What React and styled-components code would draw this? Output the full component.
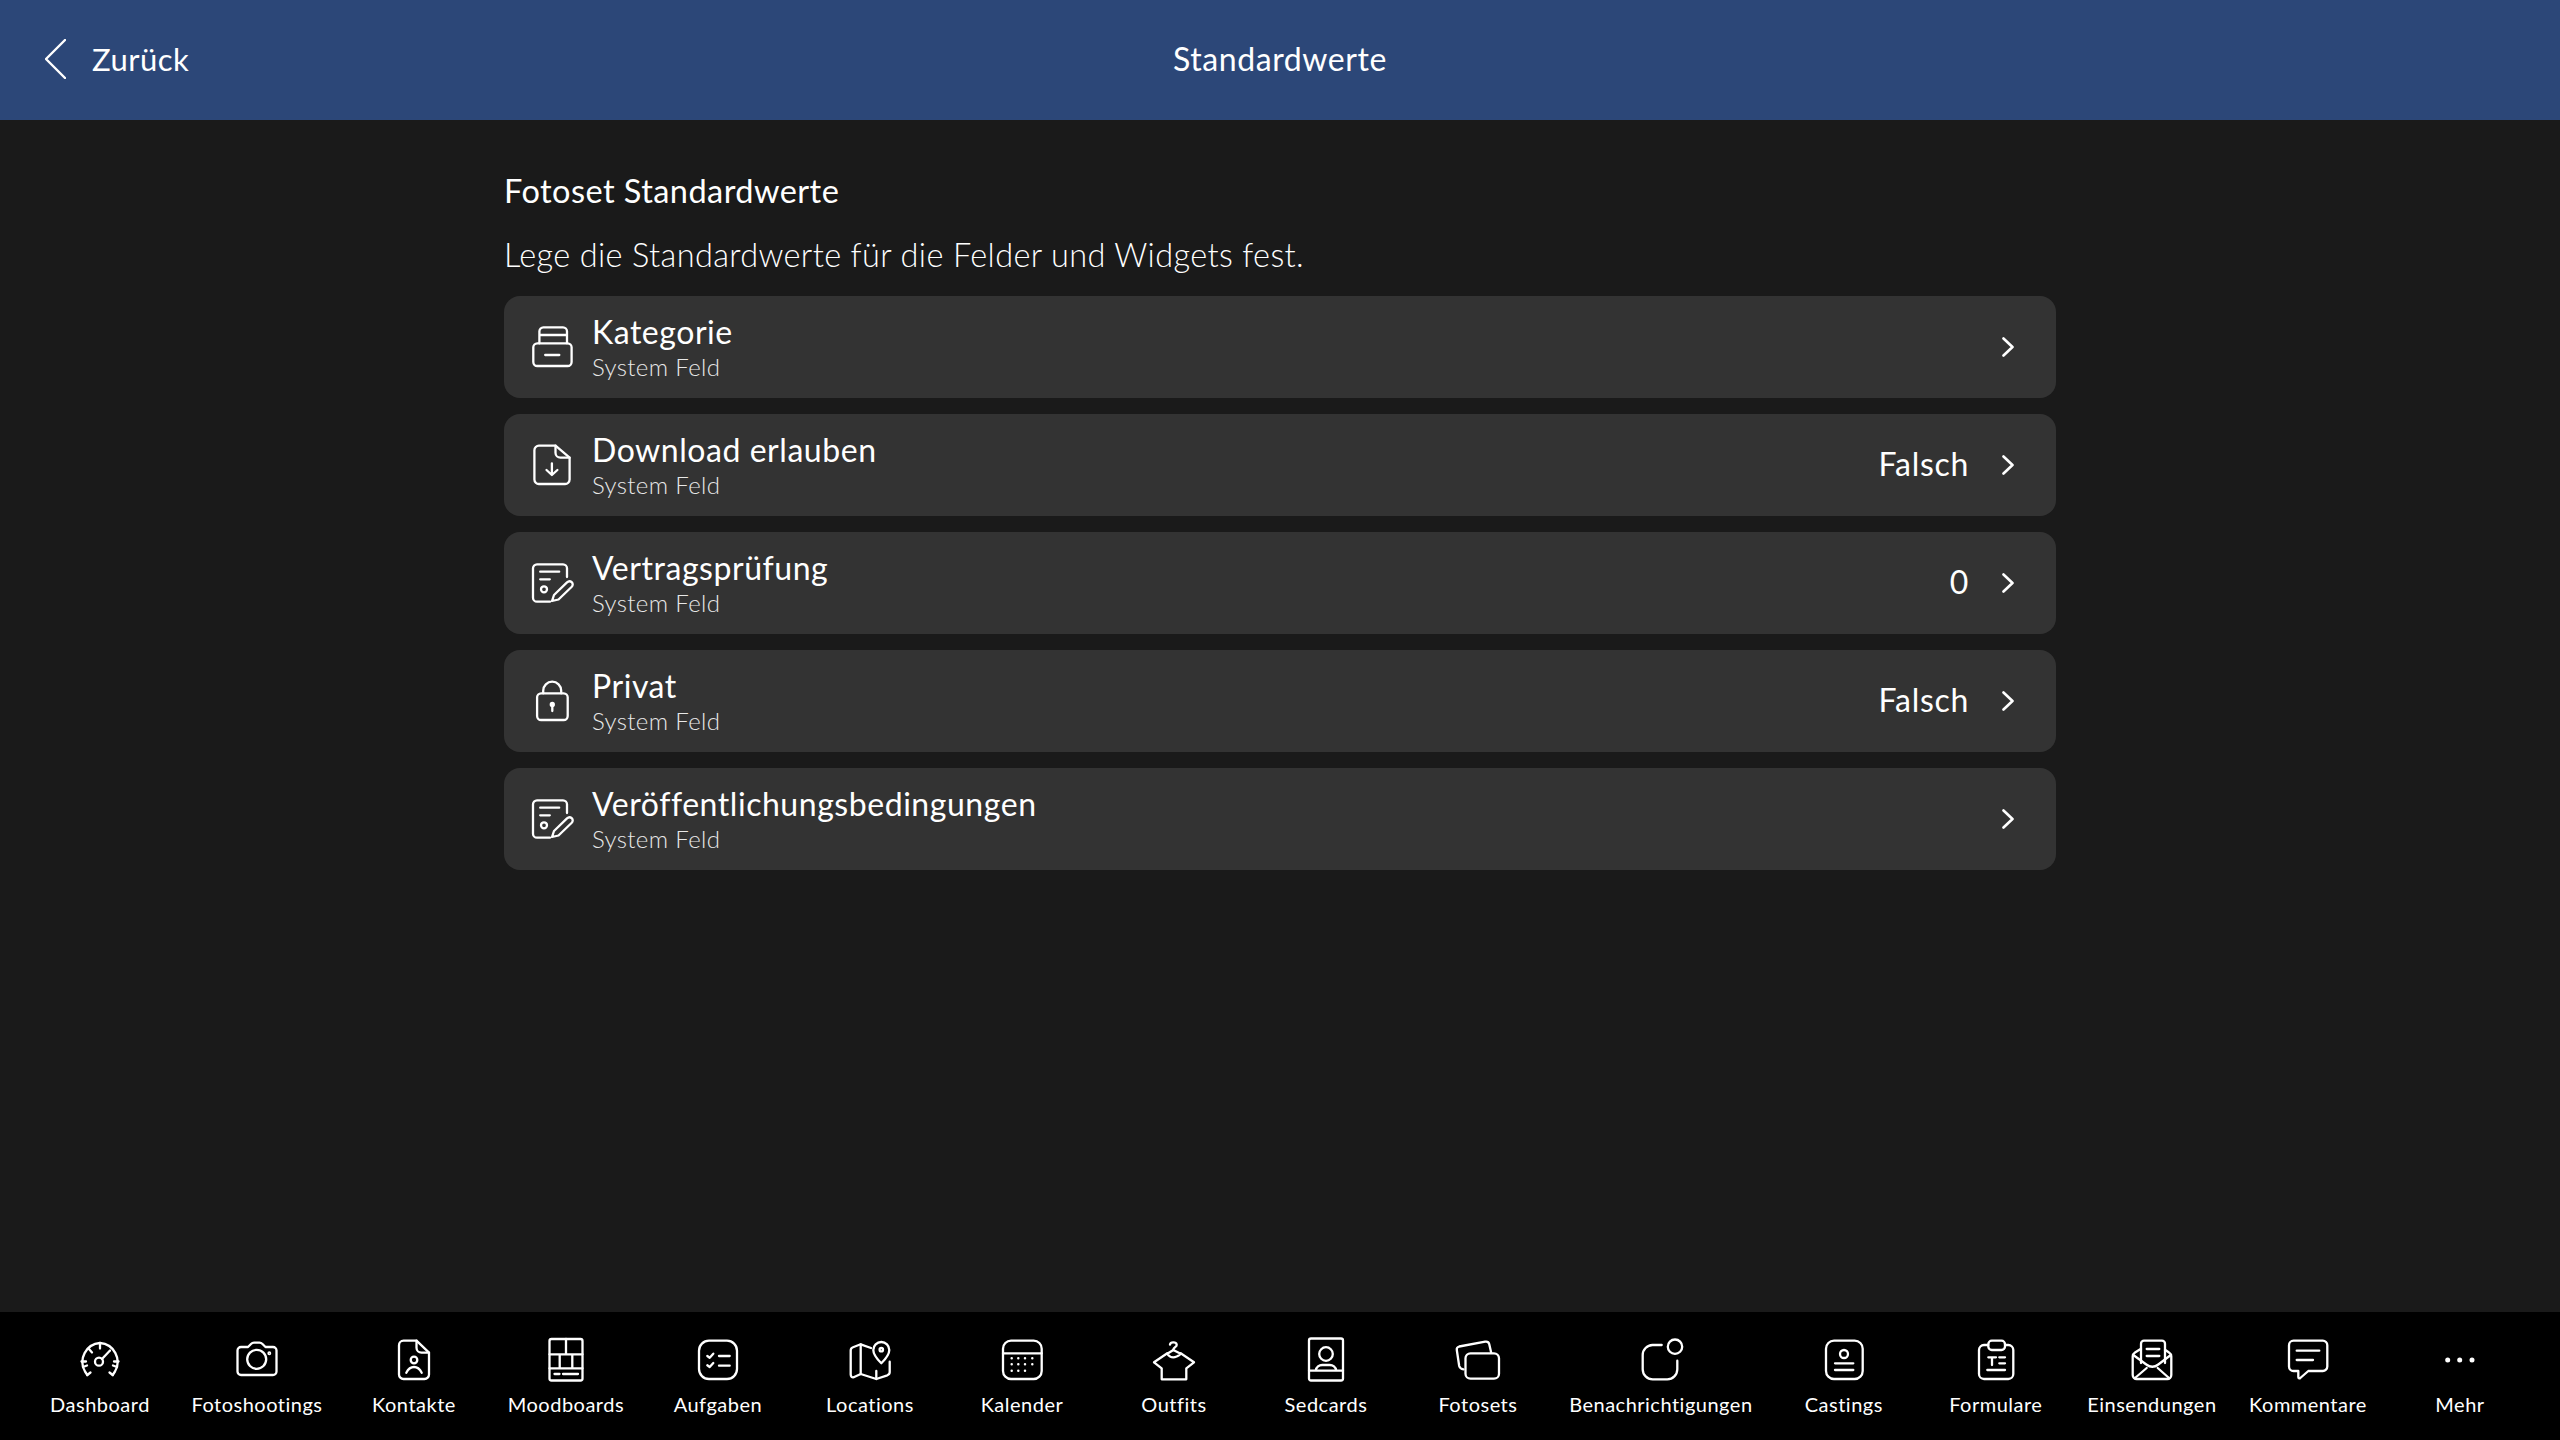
import styled, { createGlobalStyle } from 'styled-components'

const Global = createGlobalStyle`
    html, body { margin: 0; padding: 0; background: #1a1a1a; }
    body { font-family: 'Lato', 'Open Sans', sans-serif; color: #fff; }
`

const Screen = styled.div`
    display: flex;
    flex-direction: column;
    width: 2560px;
    height: 1440px;
    overflow: hidden;
    background: #1a1a1a;
`

const Header = styled.header`
    display: grid;
    grid-template-columns: 1fr auto 1fr;
    align-items: center;
    height: 120px;
    padding: 0 45px 3px;
    box-sizing: border-box;
    background: #2c4778;
    flex-shrink: 0;
`

const BackLink = styled.div`
    display: flex;
    align-items: center;
    gap: 26px;
    font-size: 31px;
    letter-spacing: 0.5px;
`

const HeaderTitle = styled.h1`
    margin: 0;
    font-size: 32px;
    font-weight: 400;
    letter-spacing: 0.6px;
`

const Content = styled.main`
    flex: 1;
    width: 1552px;
    margin: 0 auto;
    padding-top: 50px;
    box-sizing: border-box;
`

const SectionTitle = styled.h2`
    margin: 0;
    height: 42px;
    line-height: 42px;
    font-size: 32.5px;
    font-weight: 400;
    letter-spacing: 0.45px;
`

const Description = styled.p`
    margin: 22px 0 0;
    height: 42px;
    line-height: 42px;
    font-size: 32.5px;
    font-weight: 300;
    letter-spacing: 0.36px;
`

const List = styled.div`
    display: flex;
    flex-direction: column;
    gap: 16px;
    margin-top: 20px;
`

const Row = styled.div`
    display: flex;
    align-items: center;
    height: 102px;
    padding: 0 42px 0 28px;
    box-sizing: border-box;
    border-radius: 16px;
    background: #333333;
`

const RowText = styled.div`
    flex: 1;
    margin-left: 20px;
`

const RowTitle = styled.div`
    font-size: 32px;
    line-height: 38px;
    letter-spacing: 0.55px;
`

const RowSub = styled.div`
    margin-top: 1px;
    font-size: 24px;
    line-height: 30px;
    font-weight: 300;
    color: #e8e8e8;
    letter-spacing: 0.35px;
`

const RowValue = styled.div`
    margin: 0 33px 3px 0;
    font-size: 32px;
    letter-spacing: 0.7px;
`

const TabBar = styled.nav`
    display: flex;
    flex-shrink: 0;
    height: 128px;
    padding: 0 24px;
    box-sizing: border-box;
    background: #000;
`

const Tab = styled.div`
    display: flex;
    flex-direction: column;
    align-items: center;
    min-width: 152px;
    padding: 28px 16px 0;
    box-sizing: border-box;
    font-size: 20px;
    letter-spacing: 0.5px;
    white-space: nowrap;
`

const TabLabel = styled.span`
    margin-top: 11px;
    line-height: 26px;
`

const Icon = styled.svg`
    display: block;
    flex-shrink: 0;
    width: 40px;
    height: 40px;
    overflow: visible;
    fill: none;
    stroke: #fff;
    stroke-width: ${(p) => p.$weight || 2.3};
    stroke-linecap: round;
    stroke-linejoin: round;
`

const Glyph = ({ children, weight }) => <Icon viewBox="0 0 40 40" $weight={weight}>{children}</Icon>

const Chevron = () => (
    <svg width="12" height="20" viewBox="0 0 12 20" fill="none" stroke="#fff" strokeWidth="2.6" strokeLinecap="round" strokeLinejoin="round">
        <path d="M1.5 1.5 10.5 10l-9 8.5" />
    </svg>
)

const BackArrow = () => (
    <svg width="21" height="40" viewBox="0 0 21 40" fill="none" stroke="#fff" strokeWidth="2.4" strokeLinecap="round" strokeLinejoin="round">
        <path d="M20 1 1 20l19 19" />
    </svg>
)

const Contract = () => (
    <Glyph>
        <path d="M18 38.7H5a4 4 0 0 1-4-4V5.3a4 4 0 0 1 4-4h26a4 4 0 0 1 4 4V14" />
        <path d="M8.2 8.7h19M8.2 16.3h9.6" />
        <circle cx="12" cy="26.3" r="3" />
        <path d="M20 38l6.5-1.5L39.5 24c1.6-1.7 1.6-3.5.2-4.8s-3.1-1.3-4.7.2L22 32z" />
    </Glyph>
)

const rows = [
    {
        title: 'Kategorie',
        icon: (
            <Glyph>
                <rect x="1.3" y="16.3" width="38.3" height="22.7" rx="4" />
                <path d="M7.4 16.3V4.3a4 4 0 0 1 4-4H31a4 4 0 0 1 4 4v12M7.4 8h27.6M13.2 28h14.1" />
            </Glyph>
        ),
    },
    {
        title: 'Download erlauben',
        value: 'Falsch',
        icon: (
            <Glyph>
                <path d="M23.5.7H7a4.5 4.5 0 0 0-4.6 4.5v29.3A4.5 4.5 0 0 0 7 39h26a4.5 4.5 0 0 0 4.6-4.5V12.7z" />
                <path d="M23.5.7v7a5 5 0 0 0 5 5h9.1" />
                <path d="M19.9 18.3V30M14.5 25l5.4 5 5.500-5" />
            </Glyph>
        ),
    },
    { title: 'Vertragsprüfung', value: '0', icon: <Contract /> },
    {
        title: 'Privat',
        value: 'Falsch',
        icon: (
            <Glyph>
                <rect x="5.1" y="12.3" width="30.6" height="26.7" rx="4" />
                <path d="M11.2 12.3V9.7a9 9 0 0 1 18 0v2.6" />
                <circle cx="20.3" cy="23.5" r="1.5" />
                <path d="M20.3 24v6" />
            </Glyph>
        ),
    },
    { title: 'Veröffentlichungsbedingungen', icon: <Contract /> },
]

const tabs = [
    {
        label: 'Dashboard',
        icon: (
            <Glyph>
                <path d="M7.3 35 5 31.5A19 19 0 0 1 20 3a19 19 0 0 1 15 28.5L32.7 35" />
                <path d="M3 27l4-1.5M37 27l-4-1.5M1.5 21.5H6M38.5 21.5H34M20 3v5.5M9 9l3 3.5" />
                <path d="M7.3 35l3.2-2.5M32.7 35l-3.2-2.5" />
                <circle cx="19" cy="21.7" r="4" />
                <path d="M22 19l8-8.5" />
            </Glyph>
        ),
    },
    {
        label: 'Fotoshootings',
        icon: (
            <Glyph>
                <path d="M4 7h7l3-3c1-1 2-1.3 3-1.3h5.5c1 0 2 .3 3 1.3l3 3H36a3.5 3.5 0 0 1 3.5 3.5V31.5A3.5 3.5 0 0 1 36 35H4a3.5 3.5 0 0 1-3.5-3.5V10.5A3.5 3.5 0 0 1 4 7z" />
                <circle cx="19.7" cy="19.3" r="9.5" />
                <circle cx="32.3" cy="13.3" r="0.8" />
            </Glyph>
        ),
    },
    {
        label: 'Kontakte',
        icon: (
            <Glyph>
                <path d="M22.5.7H9.5A4.5 4.5 0 0 0 5 5.2v29.3A4.5 4.5 0 0 0 9.5 39h21a4.5 4.5 0 0 0 4.5-4.5V12.7z" />
                <path d="M22.5.7v7a5 5 0 0 0 5 5H35" />
                <circle cx="20" cy="20" r="3.3" />
                <path d="M12.3 32.7c2-3.9 4.7-5.7 7.7-5.700s5.7 1.8 7.7 5.7" />
            </Glyph>
        ),
    },
    {
        label: 'Moodboards',
        icon: (
            <Glyph>
                <rect x="3.5" y="-1" width="33" height="41.5" rx="2" />
                <path d="M3.5 14.3h33M3.5 28.3h33M20 -1v15.3M13.7 14.3v14M26.3 14.3v14M8.5 34h5M17 34h15" />
            </Glyph>
        ),
    },
    {
        label: 'Aufgaben',
        icon: (
            <Glyph>
                <rect x="1" y="0.7" width="38" height="38.3" rx="10" />
                <path d="M9.3 16l2.4 1.7 3.600-4M9.3 25.3l2.4 1.7 3.600-4M21 16h10.7M21 25.7h10.7" />
            </Glyph>
        ),
    },
    {
        label: 'Locations',
        icon: (
            <Glyph>
                <path d="M21 8l-10.3-3.7-7.700 3A3.5 3.5 0 0 0 .7 10.5v24c0 2 1.4 3.2 3 2.7l7-3.2L26.3 39l11-3.7c1.5-.6 2.4-1.4 2.4-3V21.7" />
                <path d="M10.7 4.3V34M26.3 31v8" />
                <path d="M31.3 23.3c-5-5-8-9-8-13.3a8 8 0 0 1 16 0c0 4.3-3 8.3-8 13.3z" />
                <circle cx="31.3" cy="9.7" r="1.7" />
            </Glyph>
        ),
    },
    {
        label: 'Kalender',
        icon: (
            <Glyph>
                <rect x="1" y="0.7" width="38.7" height="38.3" rx="8" />
                <path d="M1 13.3h38.7" />
                <path strokeWidth="2.5" d="M9.7 18.3h0M16.3 18.3h0M23 18.3h0M30.3 18.3h0M9.7 24.3h0M16.3 24.3h0M23 24.3h0M30.3 24.3h0M9.7 30.7h0M16.3 30.7h0M23 30.7h0" />
            </Glyph>
        ),
    },
    {
        label: 'Outfits',
        icon: (
            <Glyph>
                <path d="M16 4.5c.5-2.4 5.8-3 6.7 0 .6 2.3-3.4 3-3.4 5.5" />
                <path d="M19.3 10l-6 3.8c2 2.8 4 3.5 6 3.5s4-.7 7.4-3.5z" />
                <path d="M13.3 13.3 0 22.3l7.7 6v11h24.6v-11l7.7-6-13.3-9" />
            </Glyph>
        ),
    },
    {
        label: 'Sedcards',
        icon: (
            <Glyph>
                <rect x="3" y="-1.5" width="34" height="42" rx="2" />
                <circle cx="20" cy="14" r="6.8" />
                <path d="M3 30.7h34M9.7 30.7c.5-3.7 3.5-5.7 6.5-5.7h7.6c3 0 6 2 6.5 5.7" />
            </Glyph>
        ),
    },
    {
        label: 'Fotosets',
        icon: (
            <Glyph>
                <rect x="7.5" y="13.3" width="33.5" height="25.4" rx="5" />
                <path d="M5.5 29.3C3 29 1.7 28 1.2 26L-1.2 10C-1.5 8-.5 6.9 1.2 6.5L27.2 1.7C29.5 1.3 30.8 2.5 31.2 4L33.2 12.7" />
            </Glyph>
        ),
    },
    {
        label: 'Benachrichtigungen',
        icon: (
            <Glyph>
                <path d="M20.7 5H11.5A10 10 0 0 0 1.7 15v14.3a10 10 0 0 0 10 10h14.6a10 10 0 0 0 10-10v-8.6" />
                <circle cx="34" cy="6.7" r="7.2" />
            </Glyph>
        ),
    },
    {
        label: 'Castings',
        icon: (
            <Glyph>
                <rect x="2" y="0.7" width="36.7" height="38.3" rx="8" />
                <circle cx="20" cy="14" r="4" />
                <path d="M11 23.3h18.3M11 30h18.3" />
            </Glyph>
        ),
    },
    {
        label: 'Formulare',
        icon: (
            <Glyph>
                <path d="M12.3 5H8a5 5 0 0 0-5 5v24a5 5 0 0 0 5 5h24.3a5 5 0 0 0 5-5V10a5 5 0 0 0-5-5H29" />
                <rect x="12.3" y="0.7" width="16.7" height="9.3" rx="3.5" />
                <path d="M12.3 17.3H20M16 17.3V25M23.3 17.3H29M23.3 23.3H29M11.3 30H29" />
            </Glyph>
        ),
    },
    {
        label: 'Einsendungen',
        icon: (
            <Glyph>
                <path d="M9 23V3.7a3 3 0 0 1 3-3h18a3 3 0 0 1 3 3V23" />
                <path d="M14.7 9h12.6M14.7 16h12.6" />
                <path d="M9 8.8 3 12.5A5 5 0 0 0 .7 16.5V35a4 4 0 0 0 4 4h30.6a4 4 0 0 0 4-4V16.5a5 5 0 0 0-2.3-4l-4-2.7" />
                <path d="M1.3 15l13 9.5c4 3 8 3 12 0l12.5-9.5M3 38l11.7-10M37 38 25.7 28" />
            </Glyph>
        ),
    },
    {
        label: 'Kommentare',
        icon: (
            <Glyph>
                <path d="M5.5.7h29.3A4.5 4.5 0 0 1 39.3 5.2V26.5A4.5 4.5 0 0 1 34.8 31H20.3l-8 7c-1 .8-2 .3-2-1v-6H5.5A4.5 4.5 0 0 1 1 26.5V5.2A4.5 4.5 0 0 1 5.5.7z" />
                <path d="M8.7 10.7h22.6M8.7 20H25" />
            </Glyph>
        ),
    },
    {
        label: 'Mehr',
        icon: (
            <Glyph weight={5}>
                <path d="M7.7 20h0M19.700 20h0M32 20h0" />
            </Glyph>
        ),
    },
]

function App() {
    return (
        <>
            <Global />
            <Screen>
                <Header>
                    <BackLink><BackArrow />Zurück</BackLink>
                    <HeaderTitle>Standardwerte</HeaderTitle>
                </Header>
                <Content>
                    <SectionTitle>Fotoset Standardwerte</SectionTitle>
                    <Description>Lege die Standardwerte für die Felder und Widgets fest.</Description>
                    <List>
                        {rows.map((row) => (
                            <Row key={row.title}>
                                {row.icon}
                                <RowText>
                                    <RowTitle>{row.title}</RowTitle>
                                    <RowSub>System Feld</RowSub>
                                </RowText>
                                {row.value && <RowValue>{row.value}</RowValue>}
                                <Chevron />
                            </Row>
                        ))}
                    </List>
                </Content>
                <TabBar>
                    {tabs.map((tab) => (
                        <Tab key={tab.label}>
                            {tab.icon}
                            <TabLabel>{tab.label}</TabLabel>
                        </Tab>
                    ))}
                </TabBar>
            </Screen>
        </>
    )
}

export default App
